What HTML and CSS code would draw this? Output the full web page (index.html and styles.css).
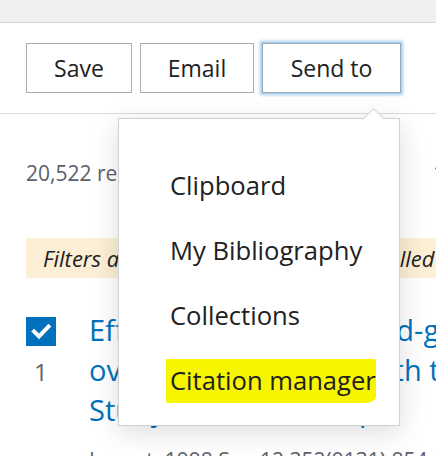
FILE: index.html
```html
<!DOCTYPE html>
<html lang="en">
<head>
<meta charset="utf-8">
<title>Send to</title>
<link rel="stylesheet" href="styles.css">
</head>
<body>
<div class="page">
  <div class="topbar"></div>
  <div class="actions">
    <button class="btn">Save</button>
    <button class="btn">Email</button>
    <div class="send-wrap">
      <button class="btn btn-active">Send to</button>
      <div class="dropdown">
        <span class="caret"></span>
        <ul class="menu">
          <li class="menu-item">Clipboard</li>
          <li class="menu-item">My Bibliography</li>
          <li class="menu-item">Collections</li>
          <li class="menu-item"><span class="marker">Citation manager</span></li>
        </ul>
      </div>
    </div>
  </div>
  <div class="results-bar">
    <span class="count">20,522 results</span>
    <span class="pager">1</span>
  </div>
  <div class="filters">Filters activated: Randomized Controlled Trial. Clear all</div>
  <div class="result">
    <div class="result-side">
      <span class="checkbox">
        <svg viewBox="0 0 30 29" width="30" height="29"><path d="M8 14.5l5 5 9.5-10" fill="none" stroke="#fff" stroke-width="4" stroke-linecap="square"/></svg>
      </span>
      <span class="num">1</span>
    </div>
    <div class="result-body">
      <a class="title">Effect of intensive blood-glucose control with metformin on complications in<br>overweight patients with type 2 diabetes (UKPDS 34). UK Prospective Diabetes<br>Study (UKPDS) Group.</a>
      <div class="citation">Lancet. 1998 Sep 12;352(9131):854-65.</div>
    </div>
  </div>
</div>
</body>
</html>
```

FILE: styles.css
```css
html, body {
  margin: 0;
  padding: 0;
  background: #fff;
  overflow: hidden;
}
body {
  width: 436px;
  height: 456px;
  font-family: "Segoe UI", "Open Sans", "Noto Sans", sans-serif;
  color: #212121;
}
.page {
  width: 436px;
  height: 456px;
  overflow: hidden;
  position: relative;
}
.topbar {
  height: 22px;
  background: #f0f0f0;
  border-bottom: 1px solid #d6d6d6;
}
.actions {
  display: flex;
  gap: 8px;
  padding: 20px 0 20px 26px;
  border-bottom: 1px solid #dcdcdc;
}
.btn {
  height: 50px;
  box-sizing: border-box;
  border: 1px solid #aeaeae;
  background: #fff;
  font-family: inherit;
  font-size: 23px;
  color: #212121;
  padding: 0;
  margin: 0;
  cursor: pointer;
}
.actions > .btn:nth-child(1) { width: 106px; }
.actions > .btn:nth-child(2) { width: 114px; }
.send-wrap {
  position: relative;
}
.btn-active {
  width: 139px;
  border-color: #9ab;
  box-shadow: 0 0 3px 2px rgba(90, 160, 215, 0.55);
}
.dropdown {
  position: absolute;
  right: 1px;
  top: 75px;
  width: 282px;
  height: 308px;
  box-sizing: border-box;
  background: #fff;
  border: 1px solid #d0d0d0;
  box-shadow: 0 6px 26px rgba(0, 0, 0, 0.14);
  z-index: 5;
}
.caret {
  position: absolute;
  top: -8px;
  right: 18px;
  width: 14px;
  height: 14px;
  background: #fff;
  border-left: 1px solid #d0d0d0;
  border-top: 1px solid #d0d0d0;
  transform: rotate(45deg);
}
.menu {
  list-style: none;
  margin: 0;
  padding: 34px 0 0 51px;
}
.menu-item {
  height: 65px;
  line-height: 65px;
  font-size: 25.6px;
  color: #212121;
  white-space: nowrap;
}
.marker {
  background: #f8f500;
  padding: 4px 0 5px 4px;
  margin-left: -4px;
  border-radius: 1px 2px 10px 1px / 1px 2px 7px 4px;
}
.results-bar {
  display: flex;
  justify-content: space-between;
  align-items: center;
  padding: 44px 0 0 26px;
  height: 30px;
  font-size: 21px;
  color: #5b616b;
}
.pager {
  width: 3px;
  overflow: hidden;
  color: #5b616b;
}
.filters {
  margin: 50px 0 0 26px;
  height: 40px;
  line-height: 40px;
  padding-left: 17px;
  background: #fcefd5;
  font-style: italic;
  font-size: 22px;
  white-space: nowrap;
}
.result {
  display: flex;
  margin-top: 39px;
  padding-left: 26px;
}
.result-side {
  width: 63px;
  display: flex;
  flex-direction: column;
  align-items: flex-start;
  flex-shrink: 0;
}
.checkbox {
  display: block;
  width: 30px;
  height: 29px;
  background: #0071bc;
  margin-top: 0;
}
.checkbox svg { display: block; }
.num {
  font-size: 24px;
  color: #5b616b;
  margin: 9px 0 0 8px;
}
.result-body {
  flex-shrink: 0;
  white-space: nowrap;
}
.title {
  display: block;
  font-size: 29px;
  line-height: 40px;
  color: #0071bc;
  margin-top: -7px;
}
.citation {
  font-size: 21px;
  color: #5b616b;
  margin-top: 16px;
}
```
